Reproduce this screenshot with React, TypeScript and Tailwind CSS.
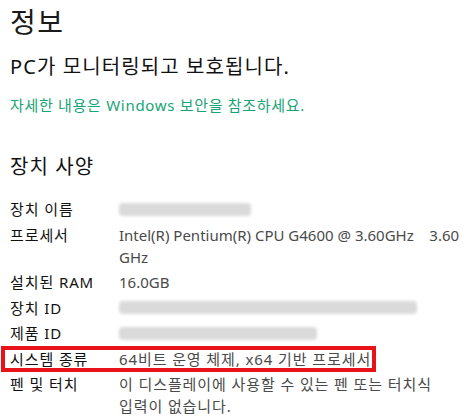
const font = {
  fontFamily: '"Noto Sans", "Noto Sans CJK KR", sans-serif',
};

function Blur({ width }: { width: number }) {
  return (
    <div className="flex h-[15px] items-center" style={{ width }}>
      <div className="h-[13px] w-full rounded-sm bg-[#dadada] blur-[1.5px]" />
    </div>
  );
}

type Row = { label: string; value: React.ReactNode; boxed?: boolean };

const rows: Row[] = [
  { label: "장치 이름", value: <Blur width={132} /> },
  {
    label: "프로세서",
    value: (
      <span className="tracking-normal">
        Intel(R) Pentium(R) CPU G4600 @ 3.60GHz&nbsp;&nbsp;&nbsp;&nbsp;3.60
        <br />
        GHz
      </span>
    ),
  },
  { label: "설치된 RAM", value: <span className="tracking-normal">16.0GB</span> },
  { label: "장치 ID", value: <Blur width={298} /> },
  { label: "제품 ID", value: <Blur width={198} /> },
  { label: "시스템 종류", value: "64비트 운영 체제, x64 기반 프로세서", boxed: true },
  {
    label: "펜 및 터치",
    value: (
      <>
        이 디스플레이에 사용할 수 있는 펜 또는 터치식
        <br />
        입력이 없습니다.
      </>
    ),
  },
];

export default function App() {
  return (
    <div className="h-[419px] w-[464px] overflow-hidden bg-white pl-[10px]" style={font}>
      <h1 className="pt-[3px] text-[28px] leading-[38px] tracking-[1.5px] text-[#1a1a1a]">정보</h1>
      <p className="mt-[12px] text-[20px] leading-[28px] tracking-[1.1px] text-[#111]">
        PC가 모니터링되고 보호됩니다.
      </p>
      <p className="mt-[13px] text-[15px] leading-[22px] tracking-[0.7px] text-[#18a474]">
        자세한 내용은 Windows 보안을 참조하세요.
      </p>
      <h2 className="mt-[37px] text-[20px] leading-[28px] tracking-[1.1px] text-[#111]">장치 사양</h2>
      <div className="mt-[17px] flex flex-col gap-[3.5px] text-[15px] leading-[22px] tracking-[0.9px]">
        {rows.map((row) =>
          row.boxed ? (
            <div
              key={row.label}
              className="-my-[2px] -ml-[9px] flex h-[26px] w-[375px] items-center border-[4px] border-[#e8121b] pl-[5px]"
            >
              <span className="w-[109px] shrink-0 leading-[18px] text-[#111]">{row.label}</span>
              <span className="leading-[18px] text-[#4a4a4a]">{row.value}</span>
            </div>
          ) : (
            <div key={row.label} className="flex">
              <span className="w-[109px] shrink-0 text-[#111]">{row.label}</span>
              <div className="flex items-center whitespace-nowrap text-[#4a4a4a]">
                <span>{row.value}</span>
              </div>
            </div>
          ),
        )}
      </div>
    </div>
  );
}
